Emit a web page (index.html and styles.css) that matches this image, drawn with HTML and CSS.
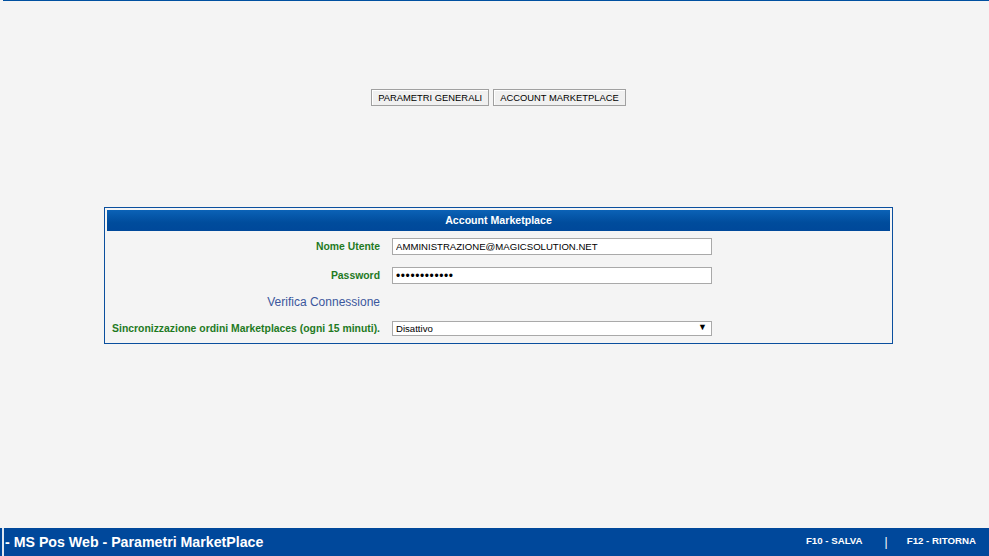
FILE: index.html
```
<!DOCTYPE html>
<html lang="it">
<head>
    <meta charset="UTF-8">
    <title>MS Pos Web - Parametri MarketPlace</title>
    <link rel="stylesheet" href="styles.css">
</head>
<body>
    <div class="top-line"></div>

    <div class="tabs">
        <button class="tab-btn">PARAMETRI GENERALI</button>
        <button class="tab-btn">ACCOUNT MARKETPLACE</button>
    </div>

    <div class="panel">
        <div class="panel-header">Account Marketplace</div>
        <div class="form-grid">
            <label class="field-label">Nome Utente</label>
            <input class="field-input" type="text" value="AMMINISTRAZIONE@MAGICSOLUTION.NET">

            <label class="field-label">Password</label>
            <input class="field-input pwd" type="password" value="abcdefghijkl">

            <a class="check-link" href="#">Verifica Connessione</a>
            <span></span>

            <label class="field-label">Sincronizzazione ordini Marketplaces (ogni 15 minuti).</label>
            <span class="select-wrap">
                <select class="field-select">
                    <option>Disattivo</option>
                    <option>Attivo</option>
                </select>
            </span>
        </div>
    </div>

    <div class="footer">
        <div class="footer-edge"></div>
        <div class="footer-title">- MS Pos Web - Parametri MarketPlace</div>
        <div class="footer-keys">
            <span>F10 - SALVA</span>
            <span class="sep">|</span>
            <span>F12 - RITORNA</span>
        </div>
    </div>
</body>
</html>
```

FILE: styles.css
```
html, body {
    height: 100%;
}

body {
    margin: 0;
    background-color: #f4f4f4;
    font-family: Tahoma, "Liberation Sans", Arial, sans-serif;
    font-size: 11px;
    display: flex;
    flex-direction: column;
}

.top-line {
    height: 1px;
    margin-left: 3px;
    background-color: #0050a0;
}

.tabs {
    margin-top: 88px;
    display: flex;
    justify-content: center;
    gap: 4px;
    padding-left: 8px;
}

.tab-btn {
    font-family: Tahoma, "Liberation Sans", Arial, sans-serif;
    font-size: 9.4px;
    height: 17px;
    padding: 0 6px;
    background-color: #f0f0f0;
    border: 1px solid #a0a0a0;
    box-shadow: inset 1px 1px 0 #ffffff;
    color: #000;
    cursor: pointer;
}

.panel {
    margin: 101px 0 0 104px;
    width: 783px;
    padding: 2px 2px 7px 2px;
    border: 1px solid #0a4f9e;
}

.panel-header {
    height: 21px;
    line-height: 21px;
    text-align: center;
    color: #fff;
    font-size: 10.6px;
    font-weight: bold;
    background: linear-gradient(to bottom, #0b62b6 0%, #004c9c 60%, #00489a 100%);
}

.form-grid {
    display: grid;
    grid-template-columns: 273px 320px;
    column-gap: 12px;
    row-gap: 12px;
    margin-top: 7px;
    align-items: center;
}

.field-label {
    text-align: right;
    white-space: nowrap;
    font-size: 10.4px;
    font-weight: bold;
    color: #1f7a1f;
}

.field-input {
    box-sizing: border-box;
    height: 17px;
    width: 320px;
    margin: 0;
    padding: 0 3px;
    border: 1px solid #a9a9a9;
    background-color: #fff;
    font-family: Tahoma, "Liberation Sans", Arial, sans-serif;
    font-size: 9.6px;
    color: #000;
}

.field-input.pwd {
    font-size: 12px;
    letter-spacing: 0.6px;
}

.check-link {
    text-align: right;
    color: #3b579d;
    font-size: 12px;
    text-decoration: none;
    line-height: 13px;
}

.select-wrap {
    position: relative;
    display: block;
    width: 320px;
}

.select-wrap::after {
    content: "\25BC";
    position: absolute;
    right: 5px;
    top: 1px;
    font-size: 9px;
    color: #000;
    pointer-events: none;
}

.field-select {
    appearance: none;
    -webkit-appearance: none;
    box-sizing: border-box;
    width: 320px;
    height: 15px;
    margin: 0;
    padding: 0 3px;
    border: 1px solid #a9a9a9;
    border-radius: 0;
    background-color: #fff;
    font-family: Tahoma, "Liberation Sans", Arial, sans-serif;
    font-size: 9.6px;
    color: #000;
}

.footer {
    margin-top: auto;
    height: 28px;
    display: flex;
    align-items: center;
    background-color: #00489b;
    color: #fff;
    font-weight: bold;
}

.footer-edge {
    align-self: stretch;
    width: 2px;
    margin-left: 2px;
    background-color: #dfe6ef;
}

.footer-title {
    margin-left: 1px;
    font-size: 14.2px;
}

.footer-keys {
    margin-left: auto;
    margin-right: 13px;
    font-size: 9.7px;
    display: flex;
}

.footer-keys .sep {
    margin: 0 19px 0 22px;
    font-size: 12px;
    font-weight: normal;
}
```
